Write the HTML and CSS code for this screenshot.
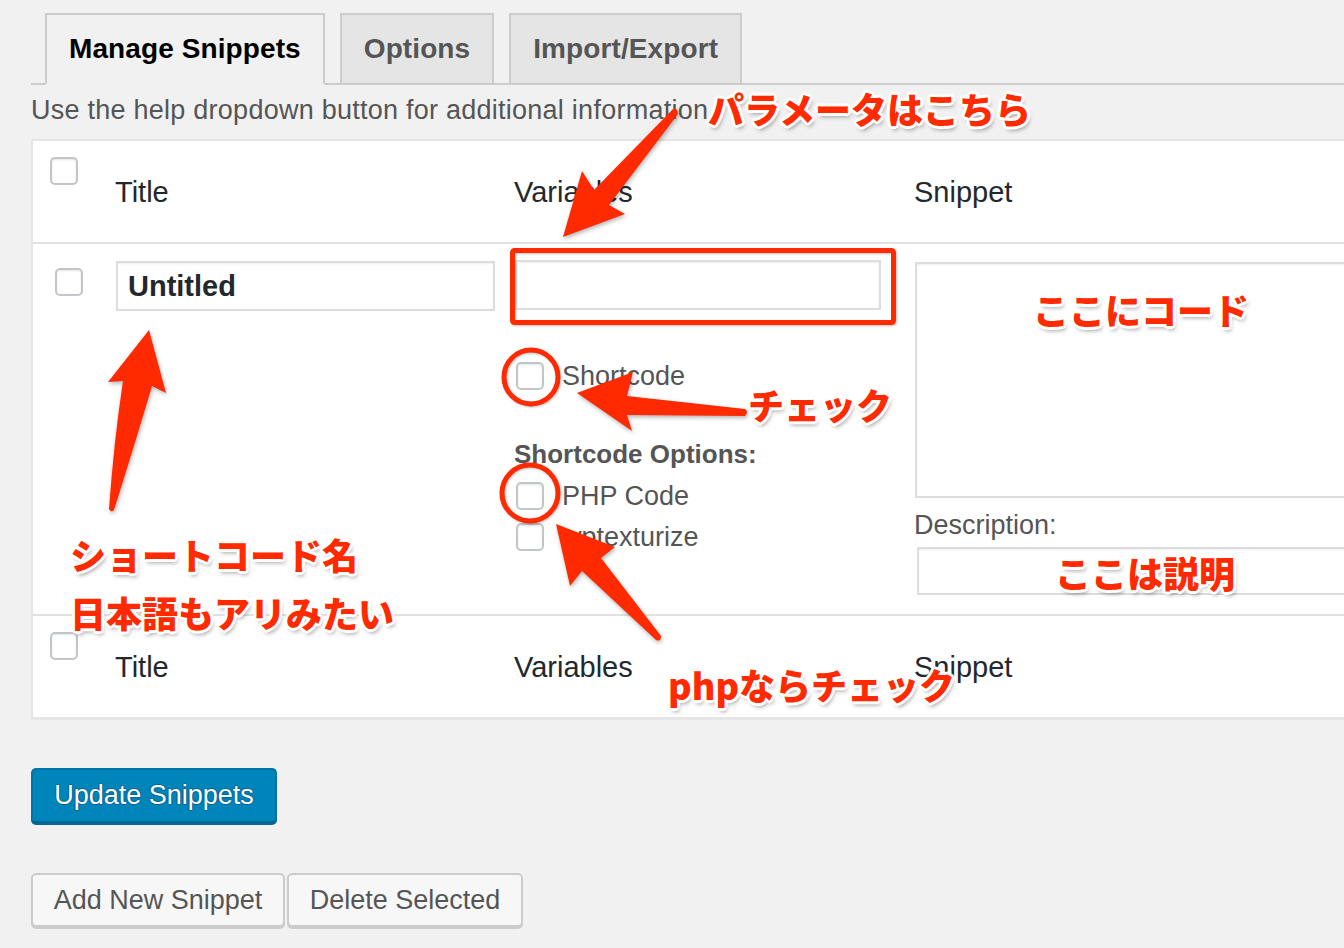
FILE: index.html
```html
<!DOCTYPE html>
<html lang="ja">
<head>
<meta charset="utf-8">
<title>Post Snippets</title>
<link rel="stylesheet" href="styles.css">
</head>
<body>
<div class="wrap">
  <nav class="tabs">
    <a class="tab active">Manage Snippets</a>
    <a class="tab">Options</a>
    <a class="tab">Import/Export</a>
  </nav>
  <p class="help">Use the help dropdown button for additional information.</p>

  <div class="table">
    <div class="row head">
      <div class="c-cb"><input type="checkbox" class="cb"></div>
      <div class="th">Title</div>
      <div class="th">Variables</div>
      <div class="th">Snippet</div>
    </div>
    <div class="row body">
      <div class="c-cb"><input type="checkbox" class="cb"></div>
      <div class="c-title"><input type="text" class="in in-title" value="Untitled"></div>
      <div class="c-vars">
        <input type="text" class="in in-vars" value="">
        <label class="opt opt-first"><input type="checkbox" class="cb"><span>Shortcode</span></label>
        <div class="opt-head">Shortcode Options:</div>
        <label class="opt"><input type="checkbox" class="cb"><span>PHP Code</span></label>
        <label class="opt"><input type="checkbox" class="cb"><span>wptexturize</span></label>
      </div>
      <div class="c-snip">
        <textarea class="ta"></textarea>
        <div class="desc-label">Description:</div>
        <input type="text" class="in in-desc" value="">
      </div>
    </div>
    <div class="row foot">
      <div class="c-cb"><input type="checkbox" class="cb"></div>
      <div class="th">Title</div>
      <div class="th">Variables</div>
      <div class="th th-snip">Snippet</div>
    </div>
  </div>

  <div class="submit"><button class="btn btn-primary">Update Snippets</button></div>
  <div class="actions">
    <button class="btn btn-add">Add New Snippet</button><button class="btn btn-del">Delete Selected</button>
  </div>
</div>

<svg class="overlay" width="1344" height="948" viewBox="0 0 1344 948">
  <g class="marks">
    <rect x="512.5" y="250.5" width="381" height="72" rx="2" fill="none" stroke="#ff2a00" stroke-width="5"/>
    <circle cx="531" cy="377" r="27" fill="none" stroke="#ff2a00" stroke-width="5"/>
    <circle cx="530" cy="493" r="28" fill="none" stroke="#ff2a00" stroke-width="5"/>
  </g>
  <g class="arrows" fill="#ff2a00">
    <path d="M673 109 L594 190 L582 171 L563 237 L625 214 L609 205 L678 114 Q678 108 673 109 Z"/>
    <path d="M745 409 L627 396 L633 372 L577 393 L632 431 L627 415 L745 416 Q749 412 745 409 Z"/>
    <path d="M556 524 L615 547 L601 558 L661 636 Q661 642 656 640 L582 571 L570 586 Z"/>
    <path d="M149 330 L166 393 L152 386 Q136 440 114 510 Q111 513 109 509 Q114 440 123 381 L108 382 Z"/>
  </g>
</svg>

<div class="note note-param">パラメータはこちら</div>
<div class="note note-code">ここにコード</div>
<div class="note note-check">チェック</div>
<div class="note note-name">ショートコード名</div>
<div class="note note-jp">日本語もアリみたい</div>
<div class="note note-desc">ここは説明</div>
<div class="note note-php">phpならチェック</div>
</body>
</html>
```

FILE: styles.css
```css
* { box-sizing: border-box; }

html, body { margin: 0; padding: 0; }

body {
  position: relative;
  width: 1344px;
  height: 948px;
  overflow: hidden;
  background: #f1f1f1;
  font-family: "Liberation Sans", Arial, sans-serif;
  color: #555;
}

.wrap { padding: 13px 0 0 31px; }

/* Tabs */
.tabs {
  display: flex;
  align-items: flex-end;
  gap: 15px;
  height: 72px;
  padding-left: 14px;
  border-bottom: 2px solid #ccc;
}
.tab {
  display: flex;
  align-items: center;
  height: 72px;
  margin-bottom: -2px;
  padding: 0 22px;
  border: 2px solid #ccc;
  background: #e5e5e5;
  color: #555;
  font-size: 28px;
  font-weight: bold;
  letter-spacing: 0.1px;
  white-space: nowrap;
}
.tab.active {
  background: #f1f1f1;
  border-bottom-color: #f1f1f1;
  color: #000;
}

.help {
  margin: 10px 0 0;
  font-size: 27px;
  line-height: 30px;
  letter-spacing: 0.25px;
  color: #555;
  white-space: nowrap;
}

/* Table */
.table {
  width: 1400px;
  margin-top: 14px;
  background: #fff;
  border: 2px solid #e5e5e5;
  box-shadow: 0 1px 1px rgba(0,0,0,.04);
}
.row {
  display: grid;
  grid-template-columns: 82px 399px 400px 1fr;
}
.row.head { height: 103px; align-items: center; border-bottom: 2px solid #e1e1e1; }
.row.body { height: 372px; align-items: start; border-bottom: 2px solid #e1e1e1; }
.row.foot { height: 101px; align-items: center; }

.th {
  font-size: 29px;
  line-height: 34px;
  color: #23282d;
}
.head .c-cb, .foot .c-cb { align-self: start; padding: 16px 0 0 17px; }
.body .c-cb { padding: 24px 0 0 22px; }

.cb {
  -webkit-appearance: none;
  appearance: none;
  display: block;
  width: 28px;
  height: 28px;
  margin: 0;
  border: 2px solid #c3c6c9;
  border-radius: 5px;
  background: #fff;
  box-shadow: inset 0 1px 2px rgba(0,0,0,.1);
}

.in {
  -webkit-appearance: none;
  appearance: none;
  display: block;
  margin: 0;
  border: 2px solid #ddd;
  background: #fff;
  box-shadow: inset 0 1px 2px rgba(0,0,0,.07);
  font-family: inherit;
  color: #23282d;
  outline: none;
}
.in-title {
  width: 379px;
  height: 50px;
  margin: 17px 0 0 1px;
  padding: 0 10px;
  font-size: 29px;
  font-weight: bold;
}
.in-vars {
  width: 366px;
  height: 50px;
  margin: 16px 0 0 1px;
}

.opt {
  display: flex;
  align-items: center;
  gap: 18px;
  margin: 13px 0 0 2px;
  font-size: 27px;
  line-height: 28px;
  color: #555;
}
.opt-first { margin-top: 52px; }
.opt-head {
  margin-top: 49px;
  font-size: 26px;
  line-height: 30px;
  font-weight: bold;
  color: #555;
}

.ta {
  display: block;
  width: 600px;
  height: 236px;
  margin: 18px 0 0 1px;
  border: 2px solid #ddd;
  box-shadow: inset 0 1px 2px rgba(0,0,0,.07);
  resize: none;
  background: #fff;
}
.desc-label {
  margin-top: 12px;
  font-size: 27px;
  line-height: 30px;
  color: #555;
}
.in-desc {
  width: 600px;
  height: 48px;
  margin: 7px 0 0 3px;
}

/* Buttons */
.submit { margin-top: 49px; }
.btn {
  display: inline-block;
  margin: 0;
  font-family: inherit;
  font-size: 27px;
  border-radius: 5px;
  white-space: nowrap;
  cursor: pointer;
}
.btn-primary {
  width: 246px;
  height: 55px;
  padding: 0;
  background: #0085ba;
  border: 2px solid #0073aa;
  border-bottom-color: #006799;
  box-shadow: 0 2px 0 #006799;
  color: #fff;
  text-shadow: 0 -1px 1px #006799, 1px 0 1px #006799, 0 1px 1px #006799, -1px 0 1px #006799;
}
.actions { display: flex; gap: 2px; margin-top: 50px; }
.btn-add, .btn-del {
  height: 54px;
  padding: 0;
  background: #f7f7f7;
  border: 2px solid #ccc;
  box-shadow: 0 2px 0 #ccc;
  color: #555;
}
.btn-add { width: 254px; }
.btn-del { width: 236px; }

/* Annotation overlay */
.overlay {
  position: absolute;
  left: 0;
  top: 0;
  pointer-events: none;
}
.marks { filter: drop-shadow(1px 1px 1px rgba(0,0,0,.25)); }
.arrows { filter: drop-shadow(1px 2px 2px rgba(0,0,0,.3)); }

.note {
  position: absolute;
  font-family: "Noto Sans CJK JP", "Liberation Sans", sans-serif;
  font-weight: 900;
  font-size: 36px;
  line-height: 36px;
  color: #ff2a00;
  white-space: nowrap;
  text-shadow:
    2px 0 0 #fff, -2px 0 0 #fff, 0 2px 0 #fff, 0 -2px 0 #fff,
    2px 2px 0 #fff, -2px 2px 0 #fff, 2px -2px 0 #fff, -2px -2px 0 #fff,
    3px 0 0 #fff, -3px 0 0 #fff, 0 3px 0 #fff, 0 -3px 0 #fff,
    2px 4px 4px rgba(0,0,0,.35);
}
.note-param { left: 708px; top: 90px; }
.note-code  { left: 1033px; top: 291px; }
.note-check { left: 748px; top: 386px; }
.note-name  { left: 70px; top: 536px; }
.note-jp    { left: 70px; top: 594px; }
.note-desc  { left: 1055px; top: 554px; }
.note-php   { left: 668px; top: 666px; }
```
